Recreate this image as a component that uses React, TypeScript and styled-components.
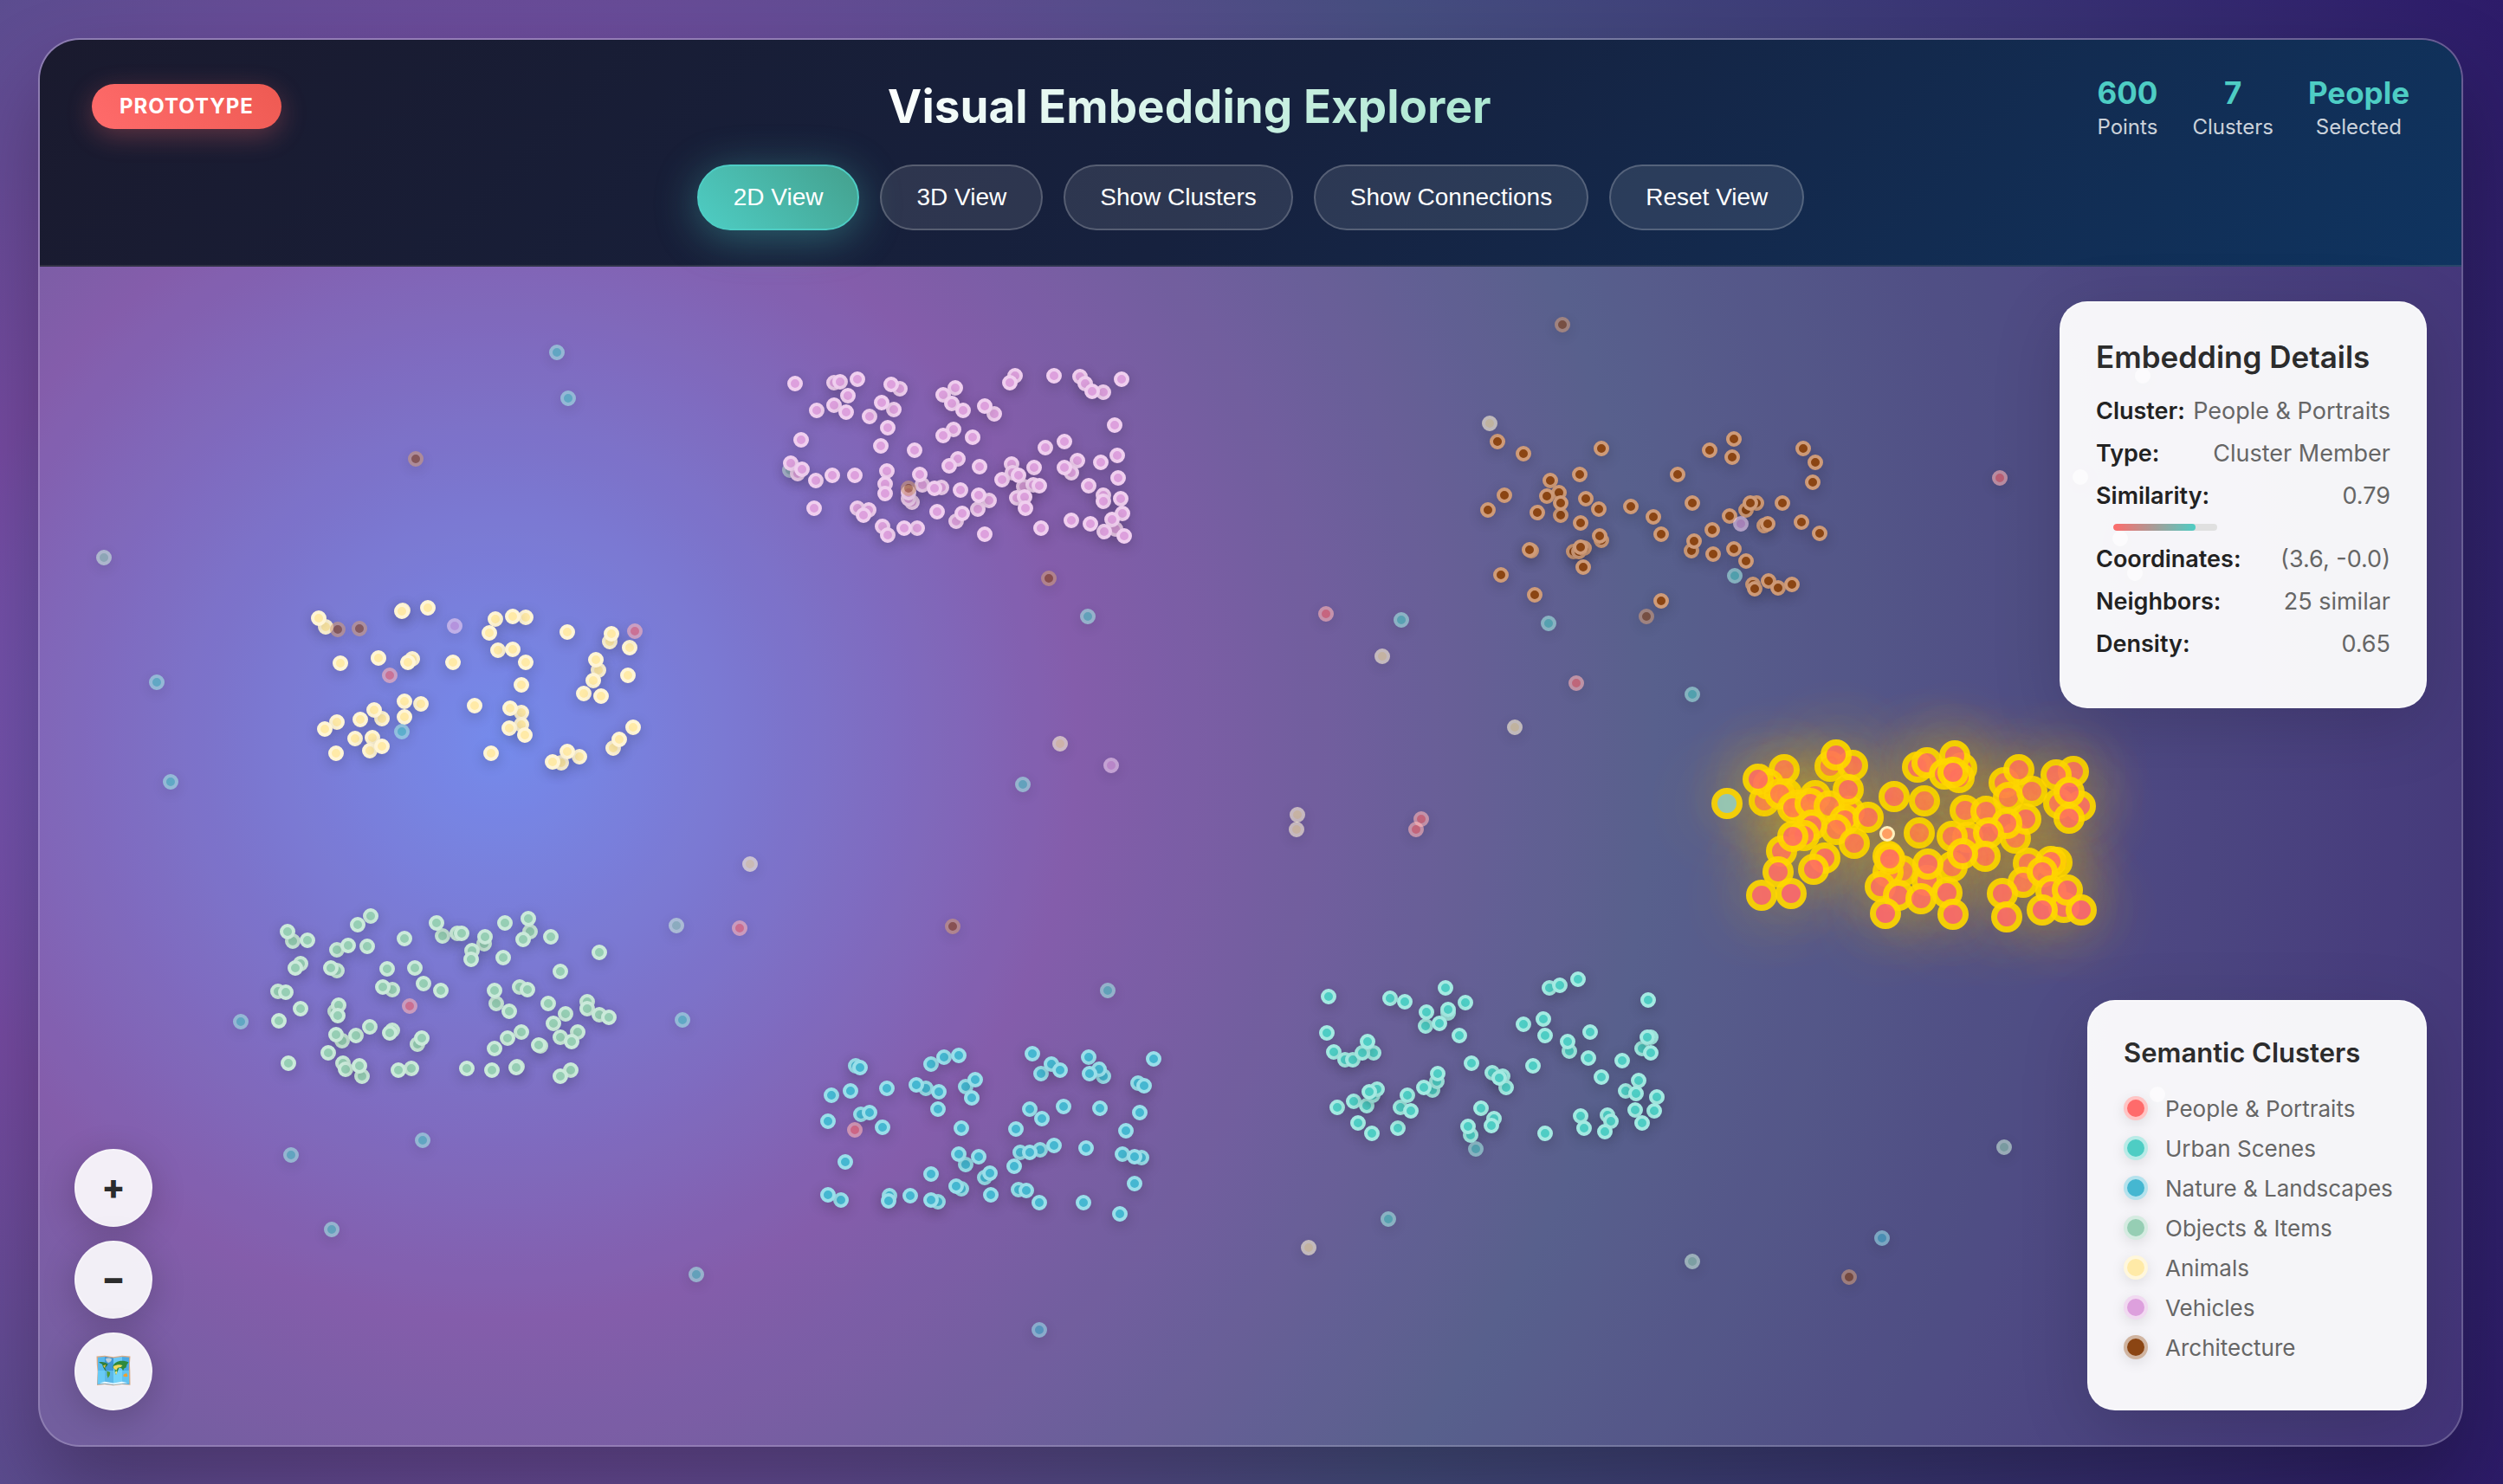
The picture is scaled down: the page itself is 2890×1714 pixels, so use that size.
import React, { useState } from "react";
import styled, { createGlobalStyle, css } from "styled-components";

const GlobalStyle = createGlobalStyle`
  *, *::before, *::after { box-sizing: border-box; }
  body {
    margin: 0;
    font-family: Inter, "Liberation Sans", sans-serif;
    color: #2c2c2c;
    background: #2d1b69;
  }
`;

/* ---------- data ---------- */

type Kind = "people" | "urban" | "nature" | "objects" | "animals" | "vehicles" | "architecture" | "plain";

const palette: Record<Kind, { core: string; ring: string }> = {
  people: { core: "#ff6b6b", ring: "#ffb5b5" },
  urban: { core: "#4ecdc4", ring: "#a4eae2" },
  nature: { core: "#45b7d1", ring: "#9adfea" },
  objects: { core: "#96ceb4", ring: "#cbeada" },
  animals: { core: "#ffeaa7", ring: "#fff5d6" },
  vehicles: { core: "#dda0dd", ring: "#f0cfef" },
  architecture: { core: "#8b4513", ring: "#cf9b78" },
  plain: { core: "#ffffff", ring: "#ffffff" },
};

const legend: { kind: Kind; label: string }[] = [
  { kind: "people", label: "People & Portraits" },
  { kind: "urban", label: "Urban Scenes" },
  { kind: "nature", label: "Nature & Landscapes" },
  { kind: "objects", label: "Objects & Items" },
  { kind: "animals", label: "Animals" },
  { kind: "vehicles", label: "Vehicles" },
  { kind: "architecture", label: "Architecture" },
];

/* Extent of the embedding space, in map units. */
const SPACE = { left: 46, top: 308, width: 2796, height: 1361 };

/* Members are listed on a grid three times finer than the map, from the cluster's origin. */
const CLUSTER_GRID = 3;

interface Cluster {
  kind: Kind;
  x: number;
  y: number;
  members: string;
}

const clusters: Cluster[] = [
  {
    kind: "vehicles", x: 880, y: 400,
    members: `113,130 250,127 269,122 329,114 298,172 478,146 446,132 188,221 248,205 290,229 371,244 457,219
    414,195 436,281 412,346 136,325 527,361 668,143 628,168 657,198 697,223 803,234 772,208 662,289 626,310
    730,315 877,101 857,127 1011,101 1100,106 1119,130 1181,158 1142,156 1246,114 1220,273 980,352 1048,330
    1231,378 1173,401 1092,396 124,440 99,406 138,427 185,466 242,446 321,447 433,433 425,477 425,511 518,540
    506,528 506,508 554,479 545,444 620,490 596,492 679,391 649,413 754,417 688,499 785,533 748,565 751,516
    672,605 694,578 607,573 772,651 180,560 330,560 368,567 352,586 417,623 436,654 538,629 493,630 863,408
    866,437 831,461 941,421 905,487 887,447 940,480 960,482 883,526 910,521 912,562 967,630 1072,438 1048,420
    1132,484 1233,456 1183,517 1183,538 1243,528 1225,632 1249,578 1211,600 1186,641 1254,657 1071,604 1136,615`,
  },
  {
    kind: "architecture", x: 1680, y: 460,
    members: `146,150 238,192 507,174 431,263 329,286 360,328 318,338 366,404 366,362 170,336 113,388 285,395 452,349
    498,384 436,432 507,492 501,477 608,375 686,411 715,471 264,527 259,525 160,612 277,680 412,531 448,518 428,530
    436,516 444,586 881,179 967,140 960,205 772,263 822,362 1207,174 1247,221 1238,291 1044,363 1007,388 1022,362
    1134,362 951,409 892,455 1070,441 1082,436 1200,429 1264,468 819,529 829,495 895,541 967,523 1009,565 1033,644
    1038,661 1085,632 1119,656 1166,645 715,703`,
  },
  {
    kind: "animals", x: 340, y: 670,
    members: `107,163 85,132 375,104 371,107 461,97 158,287 291,271 408,273 392,284 549,284 695,135 674,183 800,128
    757,125 706,242 757,240 802,284 787,362 945,180 1091,212 1097,185 1162,235 1154,329 1053,313 1044,276 1034,349
    1003,393 1063,401 625,435 787,460 787,500 747,443 744,513 797,537 680,600 437,430 382,420 382,474 304,480
    275,450 228,482 146,493 104,516 210,548 270,547 262,592 304,576 145,600 1172,511 1104,582 1125,553 988,612
    924,632 946,594 893,631`,
  },
  {
    kind: "objects", x: 290, y: 1030,
    members: `145,172 126,137 196,168 413,85 369,114 530,163 402,189 298,202 337,186 170,249 154,265 298,273 277,263
    472,268 567,265 596,317 657,343 488,340 457,330 92,346 120,348 170,406 95,447 290,414 303,392 300,430 314,516
    295,495 363,497 410,468 490,479 480,489 577,528 592,507 267,559 319,594 326,614 384,640 376,602 129,593 554,611
    511,617 746,611 663,153 642,108 715,145 728,143 807,180 809,155 764,203 762,234 879,108 965,137 960,93 942,166
    1038,156 874,229 1072,275 1205,210 848,388 843,343 895,413 931,330 957,340 1030,387 1088,424 1048,455 1163,380
    1163,404 1205,427 1239,435 1132,486 1072,505 1111,518 937,486 889,507 1001,533 996,531 842,543 835,617 921,606
    918,610 1106,617 1072,640`,
  },
  {
    kind: "nature", x: 930, y: 1190,
    members: `175,124 189,129 90,225 155,210 283,202 192,290 223,285 77,316 267,335 137,455 124,588 79,569 291,572
    288,590 364,572 458,593 436,587 434,497 540,548 522,541 434,117 479,92 531,87 416,202 384,189 463,212 460,273
    554,194 588,170 575,234 541,340 556,466 532,429 601,439 622,509 640,495 642,570 786,82 815,150 853,116 882,137
    1031,160 981,92 1016,134 983,150 1206,98 1151,184 1174,191 1159,285 1109,348 778,272 820,306 895,265 1021,270
    729,342 812,415 744,423 778,423 862,398 971,408 723,471 739,553 765,556 810,598 963,598 1088,635 1141,530
    1164,441 1098,429 1141,437`,
  },
  {
    kind: "urban", x: 1500, y: 1100,
    members: `103,154 314,159 366,170 507,122 575,174 515,211 517,199 438,256 442,206 486,245 554,289 95,279 120,344
    158,371 186,373 257,347 218,347 236,308 598,383 131,537 189,516 235,530 254,494 269,474 244,482 204,590 251,626
    343,608 352,537 374,495 387,549 463,477 476,447 480,419 433,467 668,416 705,430 718,467 692,436 629,539 676,577
    666,601 593,633 585,604 866,122 903,114 966,94 1210,164 778,250 846,231 853,289 936,342 931,310 1007,276
    1002,365 809,394 1046,433 1119,376 1189,333 1219,295 1206,293 1218,347 1132,480 1177,443 1166,488 1240,500
    1229,548 1163,545 1187,592 976,566 988,610 1067,563 1081,584 1059,621 853,626`,
  },
];

const selected: Cluster = {
  kind: "people", x: 1950, y: 830,
  members: `490,165 567,163 510,125 330,178 262,285 275,228 340,262 315,260 241,211 375,300 438,268 360,310 421,293
  555,320 485,302 551,246 540,350 510,383 620,342 573,432 425,370 400,405 320,458 361,408 470,482 432,523 309,531
  251,612 354,607 710,270 815,286 799,396 792,168 825,153 945,170 921,128 885,193 935,203 916,185 1093,222 1143,176
  1108,272 1187,251 1331,184 1271,195 1280,295 1355,304 1316,255 1318,344 958,317 1028,322 965,410 912,407 1132,413
  1167,349 1100,364 1038,396 1025,477 912,513 948,468 740,528 690,530 690,478 695,487 663,582 825,560 828,505
  725,613 803,625 893,602 682,675 914,678 1176,500 1276,497 1254,495 1158,568 1224,531 1086,607 1101,687 1255,598
  1300,655 1310,594 1224,662 1360,662`,
};

/* Outliers that sit away from their own cluster, in map units. */
const outliers: [Kind, string][] = [
  ["nature", "2173,1430 1200,1536"],
  ["objects", "120,644 781,1069 1954,1457 2314,1325"],
  ["people", "854,1072 1531,709 1641,946 1635,958 1820,789 2309,552 450,780 733,729 473,1162 987,1305"],
  ["architecture", "480,530 1100,1070 1211,668 1804,375 2135,1475 390,727 415,726 1901,712 1049,564"],
  ["animals", "866,998 1224,859 1596,758 1498,941 1497,958 1749,840 1511,1441 1720,489"],
  ["vehicles", "1283,884 525,723 2010,605"],
  ["urban", `1618,716 1954,802 1603,1408 2003,665 1788,720 1704,1327 643,407 656,460 181,788 197,903 278,1180
    336,1334 488,1317 383,1420 804,1472 788,1178 1181,906 1256,712 1279,1144 464,845`],
  ["plain", "2474,434 2402,551 2448,622 2465,662 2491,1264"],
];

function parse(list: string, x = 0, y = 0, grid = 1): [number, number][] {
  return list
    .trim()
    .split(/\s+/)
    .map((pair) => {
      const [u, v] = pair.split(",").map(Number);
      return [x + u / grid, y + v / grid];
    });
}

function place([x, y]: [number, number]): React.CSSProperties {
  return {
    left: `${((x - SPACE.left) / SPACE.width) * 100}%`,
    top: `${((y - SPACE.top) / SPACE.height) * 100}%`,
  };
}

/* ---------- page ---------- */

const Page = styled.div`
  display: flex;
  min-height: 100vh;
  padding: 44px 46px 43px 44px;
  background: radial-gradient(circle at 20% 50%, #667eea 0%, #764ba2 27%, #464e80 54%, #2d1b69 100%);
`;

const Frame = styled.main`
  flex: 1;
  display: flex;
  flex-direction: column;
  overflow: hidden;
  border: 2px solid rgba(255, 255, 255, 0.2);
  border-radius: 48px;
  background: rgba(255, 255, 255, 0.1);
  box-shadow: 0 50px 100px rgba(0, 0, 0, 0.3);
`;

const Header = styled.header`
  display: flex;
  flex-direction: column;
  gap: 30px;
  padding: 40px 60px;
  border-bottom: 2px solid rgba(255, 255, 255, 0.1);
  background: linear-gradient(135deg, #1a1a2e 0%, #16213e 50%, #0f3460 100%);
`;

const TitleRow = styled.div`
  display: flex;
  align-items: center;
  justify-content: space-between;
  height: 74px;
`;

const Badge = styled.span`
  padding: 0 32px;
  border-radius: 26px;
  background: linear-gradient(45deg, #ff6b6b, #ee5a52);
  box-shadow: 0 8px 30px rgba(255, 107, 107, 0.3);
  color: #fff;
  font-size: 24px;
  font-weight: 700;
  letter-spacing: 1px;
  line-height: 52px;
`;

const Title = styled.h1`
  margin: 0;
  background: linear-gradient(135deg, #ffffff, #a8e6cf);
  background-clip: text;
  -webkit-background-clip: text;
  color: transparent;
  font-size: 53px;
  font-weight: 700;
  line-height: 68px;
`;

const Stats = styled.div`
  display: flex;
  gap: 40px;
`;

const Stat = styled.div`
  display: flex;
  flex-direction: column;
  align-items: center;
`;

const StatValue = styled.strong`
  color: #4ecdc4;
  font-size: 35px;
  font-weight: 700;
  line-height: 48px;
`;

const StatLabel = styled.span`
  color: rgba(255, 255, 255, 0.8);
  font-size: 24px;
  line-height: 32px;
`;

const Controls = styled.nav`
  display: flex;
  justify-content: center;
  gap: 24px;
`;

const ViewButton = styled.button<{ $active?: boolean }>`
  padding: 20px 40px;
  border: 2px solid rgba(255, 255, 255, 0.2);
  border-radius: 50px;
  background: rgba(255, 255, 255, 0.1);
  color: #fff;
  font-family: "Liberation Sans", Arial, sans-serif;
  font-size: 28px;
  line-height: 32px;
  cursor: pointer;

  ${({ $active }) =>
    $active &&
    css`
      border-color: #4ecdc4;
      background: linear-gradient(45deg, #4ecdc4, #44a08d);
      box-shadow: 0 8px 50px rgba(78, 205, 196, 0.4);
    `}
`;

/* ---------- map ---------- */

const Plot = styled.section`
  position: relative;
  flex: 1;
  display: flex;
  align-items: flex-end;
  justify-content: space-between;
  padding: 40px;
`;

const Points = styled.div`
  position: absolute;
  inset: 0;
`;

const Point = styled.i<{ $kind: Kind; $faint?: boolean }>`
  position: absolute;
  width: 18px;
  height: 18px;
  margin: -9px 0 0 -9px;
  border: 4px solid ${({ $kind }) => palette[$kind].ring};
  border-radius: 50%;
  background: ${({ $kind }) => palette[$kind].core};
  box-shadow: 0 4px 16px rgba(0, 0, 0, 0.2);
  opacity: ${({ $faint }) => ($faint ? 0.6 : 1)};
`;

const SelectedPoint = styled.i<{ $core: string }>`
  position: absolute;
  width: 36px;
  height: 36px;
  margin: -18px 0 0 -18px;
  border: 7px solid #ffd700;
  border-radius: 50%;
  background: ${({ $core }) => $core};
  box-shadow: 0 0 80px rgba(255, 215, 0, 0.5);
  opacity: 0.92;
`;

const FocusPoint = styled.i`
  position: absolute;
  width: 18px;
  height: 18px;
  margin: -9px 0 0 -9px;
  border: 3px solid #fff0bd;
  border-radius: 50%;
  background: #ff9f62;
`;

const ZoomControls = styled.div`
  position: relative;
  display: flex;
  flex-direction: column;
  gap: 16px;
`;

const RoundButton = styled.button`
  display: grid;
  place-items: center;
  width: 90px;
  height: 90px;
  padding: 0 0 2px;
  border: 2px solid rgba(255, 255, 255, 0.3);
  border-radius: 50%;
  background: rgba(255, 255, 255, 0.9);
  box-shadow: 0 8px 40px rgba(0, 0, 0, 0.2);
  color: #2c2c2c;
  font-family: inherit;
  font-size: 40px;
  font-weight: 800;
  line-height: 44px;
  cursor: pointer;
`;

const SidePanels = styled.aside`
  position: relative;
  align-self: stretch;
  display: flex;
  flex-direction: column;
  align-items: flex-end;
  justify-content: space-between;
`;

const Card = styled.section<{ $width: number }>`
  width: ${({ $width }) => $width}px;
  padding: 40px;
  border: 2px solid rgba(255, 255, 255, 0.3);
  border-radius: 32px;
  background: rgba(255, 255, 255, 0.95);
  box-shadow: 0 20px 80px rgba(0, 0, 0, 0.15);
`;

const DetailsTitle = styled.h2`
  margin: 0 0 24px;
  font-size: 35px;
  font-weight: 600;
  line-height: 44px;
`;

const DetailList = styled.dl`
  margin: 0;
`;

const DetailRow = styled.div`
  display: flex;
  justify-content: space-between;
  margin-bottom: 16px;
  font-size: 27px;
  line-height: 33px;
  white-space: nowrap;
`;

const Term = styled.dt`
  color: #222;
  font-weight: 600;
`;

const Value = styled.dd`
  margin: 0;
  color: #666;
`;

const Meter = styled.div`
  width: 120px;
  height: 8px;
  margin: 0 0 16px 20px;
  overflow: hidden;
  border-radius: 4px;
  background: #e0e0e0;
`;

const MeterFill = styled.div`
  height: 100%;
  border-radius: 4px;
  background: linear-gradient(90deg, #ff6b6b, #4ecdc4);
`;

const LegendTitle = styled.h2`
  margin: 0 0 30px;
  font-size: 31px;
  font-weight: 600;
  line-height: 38px;
`;

const LegendList = styled.ul`
  margin: 0;
  padding: 0;
  list-style: none;
`;

const LegendItem = styled.li`
  display: flex;
  align-items: center;
  gap: 20px;
  height: 30px;
  margin-bottom: 16px;
  color: #666;
  font-size: 26px;
  white-space: nowrap;
`;

const Swatch = styled.span<{ $kind: Kind }>`
  flex: none;
  width: 28px;
  height: 28px;
  border: 4px solid rgba(255, 255, 255, 0.6);
  border-radius: 50%;
  background: ${({ $kind }) => palette[$kind].core};
  box-shadow: 0 4px 16px rgba(0, 0, 0, 0.1);
`;

function WorldMapIcon() {
  return (
    <svg width="40" height="36" viewBox="0 0 40 36" aria-hidden="true">
      <path d="M.5 1.5 10 .8l10 1.4L30 .8l9.500.7-.6 9 .4 8 .2 16.300-9.500-.7-10 1.200-10-1.200-9 .9.600-16-.8-8z" fill="#d9ab86" />
      <path d="M2 2.800 10 2v31.300l-8.500.7.6-16z" fill="#56b9ee" />
      <path d="m10 2 10 1.500v31L10 33.300z" fill="#3f97d6" />
      <path d="M20 3.500 30 2v31.300l-10 1.200z" fill="#6cc8f5" />
      <path d="m30 2 8.200.8-.4 15 .5 16.200-8.300-.7z" fill="#4aaae4" />
      <path d="M1.900 18 38 18v15l-8-.5-10 1.200-10-1.200-8 .7z" fill="#7fe0ff" opacity=".45" />
      <path d="M11 4.500c2-1.400 5.500-1 7 .3 0 2-2 3.800-4.200 4.200-1-.8-2.600-2.300-2.800-4.500z" fill="#b9cdd8" />
      <path d="M3 8.500c2.500-.8 5-.4 7.500.2l3.300 1.800-2 3-1.600 1 .8 2.500 1.500 1.700-2.500-1.200-2-3.500-1-3.200z" fill="#2f7d3d" />
      <path d="m12.500 18.500 3.700 1.500-.6 3.500-2 3.300-1-3.500z" fill="#4f9a35" />
      <path d="M8 12.500 11 11l-1 4z" fill="#e6c33c" />
      <path d="M19.500 12.500c1-3 4-4.800 7.500-5.500 4-.6 7.500 0 10.500 1.500l-2 2.500-1 3.500-2 .8-1.300 2.700-2-2.700-2.700-.6-1.500 3.800-2 4.500-1.300-3-.2-3.700-2-1.300z" fill="#2f8a3c" />
      <path d="M20 13c2.400-1.300 5-2 7.500-1.800l3 .8-2 2-3.500.8-1.600 3-3.400-2.500z" fill="#f0d95c" />
      <path d="m23 18 1.300 1.500-1 3.500-1.300-2.500z" fill="#f3e27c" />
      <path d="M31.500 23c1.500-1.500 3-2.300 4-1.500l1 3c-1.500.9-3.500.7-5 .3z" fill="#f0a02c" />
      <path d="m4 32.500 6-1.700 10 1.700 10-1.700 6.500 1.500-6.500.5-10 1.200-10-1.200z" fill="#eef9ff" />
    </svg>
  );
}

const views = ["2D View", "3D View", "Show Clusters", "Show Connections", "Reset View"];

const stats = [
  ["600", "Points"],
  ["7", "Clusters"],
  ["People", "Selected"],
];

export default function App() {
  const [view, setView] = useState(views[0]);
  const similarity = 0.79;

  return (
    <>
      <GlobalStyle />
      <Page>
        <Frame>
          <Header>
            <TitleRow>
              <Badge>PROTOTYPE</Badge>
              <Title>Visual Embedding Explorer</Title>
              <Stats>
                {stats.map(([value, label]) => (
                  <Stat key={label}>
                    <StatValue>{value}</StatValue>
                    <StatLabel>{label}</StatLabel>
                  </Stat>
                ))}
              </Stats>
            </TitleRow>
            <Controls>
              {views.map((name) => (
                <ViewButton key={name} type="button" $active={name === view} onClick={() => setView(name)}>
                  {name}
                </ViewButton>
              ))}
            </Controls>
          </Header>

          <Plot>
            <Points>
              <Point $kind="objects" $faint style={place([912, 543])} />
              {clusters.map((c) =>
                parse(c.members, c.x, c.y, CLUSTER_GRID).map((p, i) => (
                  <Point key={c.kind + i} $kind={c.kind} style={place(p)} />
                )),
              )}
              {outliers.map(([kind, list]) =>
                parse(list).map((p, i) => <Point key={kind + i} $kind={kind} $faint style={place(p)} />),
              )}
              {parse(selected.members, selected.x, selected.y, CLUSTER_GRID).map((p, i) => (
                <SelectedPoint key={i} $core={palette.people.core} style={place(p)} />
              ))}
              <SelectedPoint $core="#9acdb6" style={place([1994, 928])} />
              <FocusPoint style={place([2179, 963])} />
            </Points>

            <ZoomControls>
              <RoundButton type="button" aria-label="Zoom in">+</RoundButton>
              <RoundButton type="button" aria-label="Zoom out">−</RoundButton>
              <RoundButton type="button" aria-label="Overview map">
                <WorldMapIcon />
              </RoundButton>
            </ZoomControls>

            <SidePanels>
              <Card $width={424}>
                <DetailsTitle>Embedding Details</DetailsTitle>
                <DetailList>
                  <DetailRow><Term>Cluster:</Term><Value>People &amp; Portraits</Value></DetailRow>
                  <DetailRow><Term>Type:</Term><Value>Cluster Member</Value></DetailRow>
                  <DetailRow><Term>Similarity:</Term><Value>{similarity}</Value></DetailRow>
                  <Meter>
                    <MeterFill style={{ width: `${similarity * 100}%` }} />
                  </Meter>
                  <DetailRow><Term>Coordinates:</Term><Value>(3.6, -0.0)</Value></DetailRow>
                  <DetailRow><Term>Neighbors:</Term><Value>25 similar</Value></DetailRow>
                  <DetailRow><Term>Density:</Term><Value>0.65</Value></DetailRow>
                </DetailList>
              </Card>

              <Card $width={392}>
                <LegendTitle>Semantic Clusters</LegendTitle>
                <LegendList>
                  {legend.map(({ kind, label }) => (
                    <LegendItem key={kind}>
                      <Swatch $kind={kind} />
                      {label}
                    </LegendItem>
                  ))}
                </LegendList>
              </Card>
            </SidePanels>
          </Plot>
        </Frame>
      </Page>
    </>
  );
}
